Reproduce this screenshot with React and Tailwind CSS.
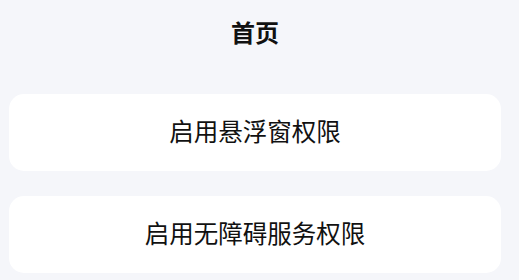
import React from "react";

export default function App() {
  return (
    <div className="w-full h-[280px] overflow-hidden bg-[#f5f6fa] pl-[9px] pr-[18px] font-['Noto_Sans_CJK_SC',sans-serif]">
      <div className="h-[64px] flex items-center justify-center">
        <span className="text-[24px] leading-none font-bold text-[#111111]">首页</span>
      </div>
      <div className="mt-[30px] flex flex-col gap-[25px]">
        <div className="h-[77px] rounded-[15px] bg-white flex items-center justify-center">
          <span className="text-[24.5px] leading-none text-[#111111] -mt-[2px]">启用悬浮窗权限</span>
        </div>
        <div className="h-[77px] rounded-[15px] bg-white flex items-center justify-center">
          <span className="text-[24.5px] leading-none text-[#111111] -mt-[2px]">启用无障碍服务权限</span>
        </div>
      </div>
    </div>
  );
}
